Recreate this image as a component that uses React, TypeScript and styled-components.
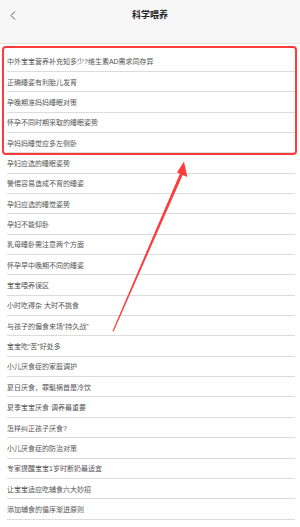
import React from "react";
import styled, { createGlobalStyle } from "styled-components";

const Global = createGlobalStyle`
  html, body { margin: 0; padding: 0; background: #ffffff; }
  body { font-family: "Liberation Sans", "Noto Sans CJK SC", sans-serif; }
`;

const Page = styled.div`
  position: relative;
  width: 300px;
  height: 527px;
  overflow: hidden;
  background: #ffffff;
`;

const Header = styled.header`
  box-sizing: border-box;
  height: 44px;
  background: #f7f7f7;
  border-bottom: 1px solid #e3e3e3;
  display: grid;
  grid-template-columns: 40px 1fr 40px;
  align-items: start;
  padding-top: 9px;
`;

const Back = styled.button`
  border: 0;
  background: none;
  padding: 0 0 0 10px;
  height: 12px;
  display: flex;
  align-items: center;
  cursor: pointer;
`;

const Title = styled.h1`
  margin: 0;
  text-align: center;
  font-size: 9px;
  line-height: 12px;
  font-weight: 700;
  color: #222;
`;

const List = styled.ul`
  list-style: none;
  margin: 0;
  padding: 7.65px 5px 0 7px;
`;

const Group = styled.li`
  position: relative;
  &::before {
    content: "";
    position: absolute;
    top: -6px;
    bottom: -2px;
    left: -5px;
    right: -2px;
    border: 2px solid #ff3b3b;
    border-radius: 4px;
    pointer-events: none;
  }
  ul { list-style: none; margin: 0; padding: 0; }
`;

const Row = styled.li`
  box-sizing: border-box;
  height: 20.35px;
  border-bottom: 1px solid #dcdcdc;
  display: flex;
  align-items: center;
  font-size: 7px;
  color: #555;
  white-space: nowrap;
`;

const Arrow = styled.svg`
  position: absolute;
  left: 0;
  top: 0;
  width: 300px;
  height: 527px;
  pointer-events: none;
`;

const highlighted = [
  "中外宝宝营养补充知多少?维生素AD需求同存异",
  "正确睡姿有利胎儿发育",
  "孕晚期准妈妈睡眠对策",
  "怀孕不同时期采取的睡眠姿势",
  "孕妈妈睡觉应多左侧卧",
];

const items = [
  "孕妇应选的睡眠姿势",
  "警惕容易造成不育的睡姿",
  "孕妇应选的睡觉姿势",
  "孕妇不能仰卧",
  "乳母睡卧需注意两个方面",
  "怀孕早中晚期不同的睡姿",
  "宝宝喂养误区",
  "小时吃得杂 大时不挑食",
  "与孩子的偏食来场“持久战”",
  "宝宝吃“苦”好处多",
  "小儿厌食症的家庭调护",
  "夏日厌食，罪魁祸首是冷饮",
  "夏季宝宝厌食 调养最重要",
  "怎样纠正孩子厌食?",
  "小儿厌食症的防治对策",
  "专家提醒宝宝1岁时断奶最适宜",
  "让宝宝适应吃辅食六大妙招",
  "添加辅食的循序渐进原则",
];

export default function App() {
  return (
    <Page>
      <Global />
      <Header>
        <Back aria-label="返回">
          <svg width="6" height="9" viewBox="0 0 6 9">
            <polyline points="5,0.5 1,4.5 5,8.5" fill="none" stroke="#555" strokeWidth="1" />
          </svg>
        </Back>
        <Title>科学喂养</Title>
        <span />
      </Header>
      <List>
        <Group>
          <ul>
            {highlighted.map((t) => (
              <Row key={t}>{t}</Row>
            ))}
          </ul>
        </Group>
        {items.map((t) => (
          <Row key={t}>{t}</Row>
        ))}
      </List>
      <Arrow viewBox="0 0 300 527">
        <polygon points="112.5,331 180.2,173 183,174.2 113.6,331.5" fill="#ff3b3b" />
        <polygon points="184,161.5 187.3,177 177,172.5" fill="#ff3b3b" />
      </Arrow>
    </Page>
  );
}
